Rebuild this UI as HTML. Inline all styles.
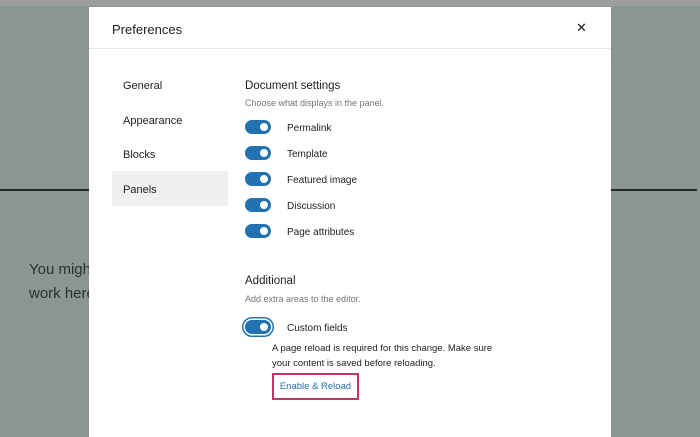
<!DOCTYPE html>
<html><head><style>
*{margin:0;padding:0;box-sizing:border-box}
body{width:700px;height:431px;overflow:hidden;background:#8a9692;font-family:"Liberation Sans",sans-serif;position:relative}
.top{position:absolute;left:0;top:0;width:700px;height:6px;background:#9d9f9e}
.line{position:absolute;top:189px;height:2px;background:#1f2a27}
.bgt{position:absolute;left:29px;font-size:15px;color:#2b3330}
.modal{position:absolute;left:89px;top:7px;width:522px;height:430px;background:#fff}
.hdr{position:absolute;left:0;top:0;width:522px;height:42px;border-bottom:1px solid #e6e6e6}
.title{position:absolute;left:23px;top:15px;font-size:13px;color:#1e1e1e}
.x{position:absolute;left:487px;top:13px;font-size:13px;color:#1e1e1e}
.nav{position:absolute;left:34px;font-size:11px;color:#1e1e1e}
.sel{position:absolute;left:23px;top:164px;width:116px;height:35px;background:#f0f0f0}
.h{position:absolute;left:156px;font-size:11.5px;color:#1e1e1e}
.s{position:absolute;left:156px;font-size:9px;color:#757575}
.tg{position:absolute;left:156px;width:26px;height:14px;border-radius:7px;background:#2271b1}
.tg::after{content:"";position:absolute;right:3px;top:3px;width:8px;height:8px;border-radius:50%;background:#fff}
.lb{position:absolute;left:198px;font-size:10px;color:#1e1e1e}
.p{position:absolute;left:183px;font-size:9.5px;color:#1e1e1e;line-height:15px}
.btn{position:absolute;left:183px;top:366px;width:87px;height:27px;border:2px solid #c2366a;font-size:9.5px;color:#2271b1;text-align:center;line-height:23px}
</style></head><body>
<div class="top"></div>
<div class="line" style="left:0;width:89px"></div>
<div class="line" style="left:611px;width:86px"></div>
<div class="bgt" style="top:261px">You migh</div>
<div class="bgt" style="top:285px">work here</div>
<div class="modal">
<div class="hdr"><div class="title">Preferences</div><div class="x">✕</div></div>
<div class="sel"></div>
<div class="nav" style="top:73px">General</div>
<div class="nav" style="top:108px">Appearance</div>
<div class="nav" style="top:142px">Blocks</div>
<div class="nav" style="top:177px">Panels</div>
<div class="h" style="top:73px">Document settings</div>
<div class="s" style="top:91px">Choose what displays in the panel.</div>
<div class="tg" style="top:113px"></div><div class="lb" style="top:116px">Permalink</div>
<div class="tg" style="top:139px"></div><div class="lb" style="top:142px">Template</div>
<div class="tg" style="top:165px"></div><div class="lb" style="top:168px">Featured image</div>
<div class="tg" style="top:191px"></div><div class="lb" style="top:194px">Discussion</div>
<div class="tg" style="top:217px"></div><div class="lb" style="top:220px">Page attributes</div>
<div class="h" style="top:268px">Additional</div>
<div class="s" style="top:287px">Add extra areas to the editor.</div>
<div class="tg" style="top:313px;box-shadow:0 0 0 1.5px #fff,0 0 0 3px #2271b1"></div><div class="lb" style="top:316px">Custom fields</div>
<div class="p" style="top:334px">A page reload is required for this change. Make sure<br>your content is saved before reloading.</div>
<div class="btn">Enable &amp; Reload</div>
</div>
</body></html>
